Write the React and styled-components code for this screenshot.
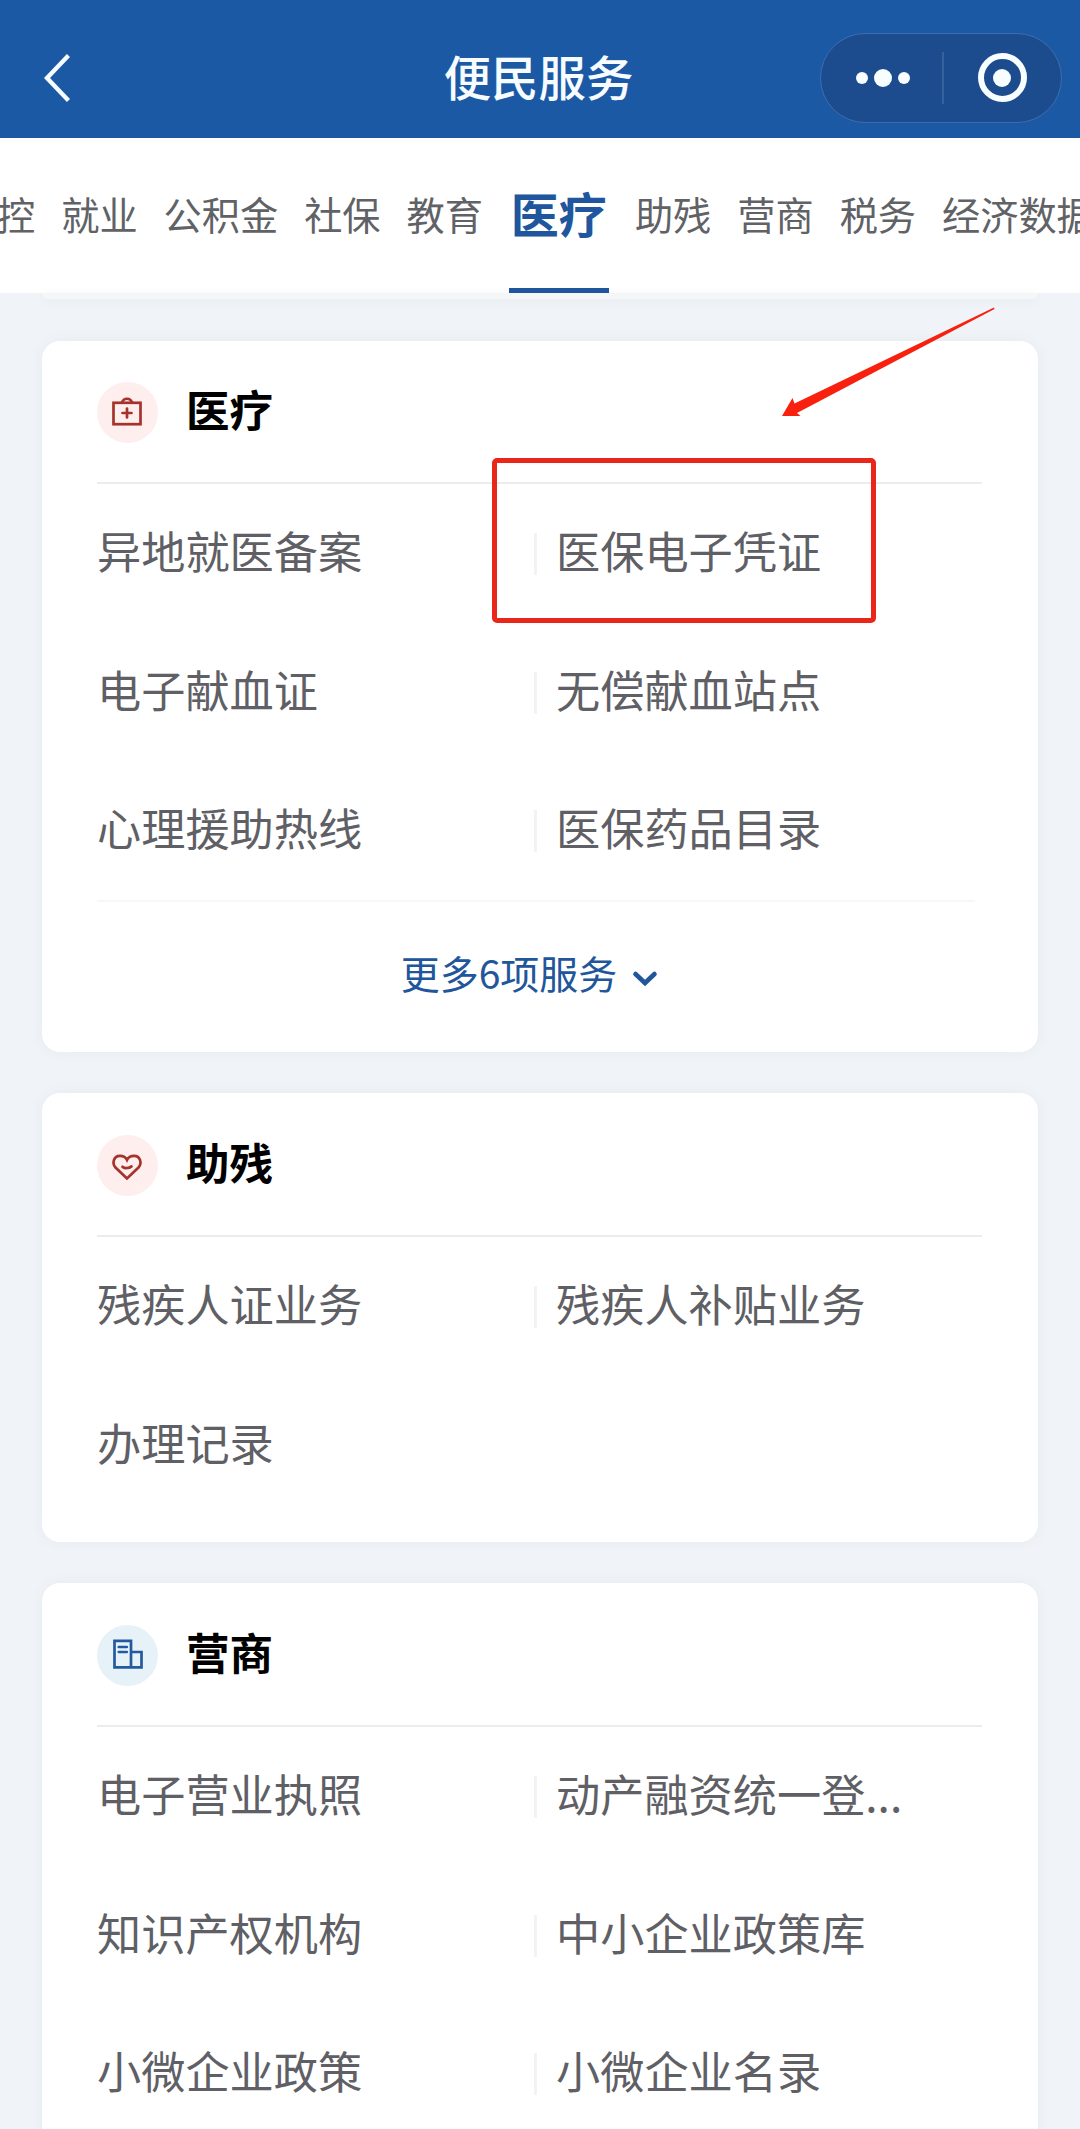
import React, { useState } from 'react';
import styled, { createGlobalStyle } from 'styled-components';

const tabs = ['控', '就业', '公积金', '社保', '教育', '医疗', '助残', '营商', '税务', '经济数据'];

const sections = [
  {
    id: 'medical',
    title: '医疗',
    tone: 'red',
    icon: 'kit',
    items: ['异地就医备案', '医保电子凭证', '电子献血证', '无偿献血站点', '心理援助热线', '医保药品目录'],
    more: 6,
  },
  {
    id: 'disabled',
    title: '助残',
    tone: 'red',
    icon: 'heart',
    items: ['残疾人证业务', '残疾人补贴业务', '办理记录'],
  },
  {
    id: 'business',
    title: '营商',
    tone: 'blue',
    icon: 'building',
    items: ['电子营业执照', '动产融资统一登...', '知识产权机构', '中小企业政策库', '小微企业政策', '小微企业名录'],
  },
];

const icons = {
  kit: (
    <>
      <rect x="16.5" y="20.8" width="27" height="21.4" />
      <path d="M25 20.5c1.5-5 8.500-5 10 0M30 26.500v9M25.500 31h9" />
    </>
  ),
  heart: (
    <>
      <path d="M30 43.500L18.500 32.500C14.800 28.500 16.500 20.800 23 20.800C26.500 20.800 28.800 22.300 30 24.800C31.200 22.300 33.500 20.800 37 20.800C43.500 20.800 45.200 28.500 41.500 32.500Z" />
      <path d="M25.500 31.800c2.400 1.800 6.600 1.600 9-.4" />
    </>
  ),
  building: (
    <>
      <path d="M17.500 15.800h16.500v26.600H17.500zM34 27h10.500v15.400H34" />
      <path d="M21.800 22h8M21.800 27h8" />
    </>
  ),
};

const App = () => {
  const [activeTab, setActiveTab] = useState('医疗');

  return (
    <Page>
      <GlobalStyle />
      <NavBar>
        <BackIcon viewBox="0 0 26 48">
          <path d="M24.500 1.500L3 24L24.500 46.500" />
        </BackIcon>
        <NavTitle>便民服务</NavTitle>
        <Capsule>
          <CapsuleHalf>
            <Dot $size={12} />
            <Dot $size={18} />
            <Dot $size={12} />
          </CapsuleHalf>
          <CapsuleDivider />
          <CapsuleHalf>
            <Ring>
              <Dot $size={18} />
            </Ring>
          </CapsuleHalf>
        </Capsule>
      </NavBar>

      <TabBar>
        {tabs.map((tab) => (
          <Tab key={tab} $active={tab === activeTab} onClick={() => setActiveTab(tab)}>
            {tab}
          </Tab>
        ))}
      </TabBar>

      <Content>
        <PreviousCard />
        {sections.map((section) => (
          <Card key={section.id}>
            <CardHeader>
              <IconCircle $tone={section.tone}>
                <svg viewBox="0 0 61 61">{icons[section.icon]}</svg>
              </IconCircle>
              <CardTitle>{section.title}</CardTitle>
            </CardHeader>
            <ServiceGrid>
              {section.items.map((item) => (
                <Service key={item}>
                  <ServiceName>{item}</ServiceName>
                </Service>
              ))}
            </ServiceGrid>
            {section.more ? (
              <MoreButton>
                更多{section.more}项服务
                <Chevron viewBox="0 0 28 18">
                  <path d="M4.500 4L14 13L23.500 4" />
                </Chevron>
              </MoreButton>
            ) : (
              <CardFoot />
            )}
          </Card>
        ))}
      </Content>

      <HighlightBox />
      <Arrow viewBox="0 0 220 116">
        <path d="M214 2.500L14.500 98.500L12.500 93L2 111H20.500L17 108L214.500 4Z" />
      </Arrow>
    </Page>
  );
};

export default App;

const GlobalStyle = createGlobalStyle`
  * {
    box-sizing: border-box;
  }

  body {
    margin: 0;
    font-family: "Noto Sans CJK SC", sans-serif;
    background: #f0f4f8;
  }
`;

const Page = styled.div`
  position: relative;
  height: 2129px;
  overflow: hidden;
  background: #f0f4f8;
`;

const NavBar = styled.header`
  display: grid;
  grid-template-columns: 260px 1fr 260px;
  align-items: center;
  height: 138px;
  padding-top: 17px;
  background: #1c59a5;
`;

const BackIcon = styled.svg`
  width: 26px;
  height: 48px;
  margin-left: 44px;
  fill: none;
  stroke: #f6fcff;
  stroke-width: 4.4;
`;

const NavTitle = styled.h1`
  margin: 0 3px 3px 0;
  font-size: 47.4px;
  font-weight: 500;
  line-height: 60px;
  text-align: center;
  color: #f6fcff;
`;

const Capsule = styled.div`
  display: flex;
  align-items: center;
  width: 242px;
  height: 90px;
  border: 1px solid #3a6fb0;
  border-radius: 45px;
  background: #1c4c8d;
`;

const CapsuleHalf = styled.div`
  display: flex;
  flex: 1;
  align-items: center;
  justify-content: center;
  gap: 6px;

  &:first-child {
    padding-left: 3px;
  }
`;

const CapsuleDivider = styled.span`
  width: 2px;
  height: 52px;
  background: #35619d;
`;

const Dot = styled.span`
  width: ${({ $size }) => $size}px;
  height: ${({ $size }) => $size}px;
  border-radius: 50%;
  background: #f8fdff;
`;

const Ring = styled.span`
  display: flex;
  align-items: center;
  justify-content: center;
  width: 49px;
  height: 49px;
  border: 6px solid #f8fdff;
  border-radius: 50%;
`;

const TabBar = styled.nav`
  display: flex;
  gap: 26px;
  height: 155px;
  margin-left: -3px;
  white-space: nowrap;
  background: #fff;
`;

const Tab = styled.div`
  flex: none;
  height: 155px;
  min-width: ${({ $active }) => ($active ? '100px' : '0')};
  border-bottom: 5px solid ${({ $active }) => ($active ? '#20569d' : 'transparent')};
  font-size: ${({ $active }) => ($active ? '48px' : '38.2px')};
  font-weight: ${({ $active }) => ($active ? 700 : 400)};
  line-height: ${({ $active }) => ($active ? '149px' : '152px')};
  text-align: center;
  color: ${({ $active }) => ($active ? '#20569d' : '#606266')};
`;

const Content = styled.main`
  display: flex;
  flex-direction: column;
  gap: 41.5px;
  padding: 0 42px;
`;

const PreviousCard = styled.div`
  height: 6px;
  border-radius: 0 0 18px 18px;
  background: #f4f6f8;
  box-shadow: 0 2px 10px rgba(60, 80, 100, 0.06);
`;

const Card = styled.section`
  padding: 0 56px 0 55px;
  border-radius: 18px;
  background: #fff;
  box-shadow: 0 0 14px rgba(60, 80, 90, 0.06);
`;

const CardHeader = styled.div`
  display: flex;
  align-items: center;
  gap: 28px;
  height: 143.5px;
  padding-top: 2px;
  border-bottom: 2px solid #ececee;
`;

const IconCircle = styled.span`
  width: 61px;
  height: 61px;
  border-radius: 50%;
  background: ${({ $tone }) => ($tone === 'red' ? '#feeeed' : '#e6f2f8')};

  svg {
    display: block;
    fill: none;
    stroke: ${({ $tone }) => ($tone === 'red' ? '#a5322b' : '#235a9f')};
    stroke-width: 2.7;
    stroke-linecap: round;
  }
`;

const CardTitle = styled.h2`
  margin: 0 0 6px;
  font-size: 43.5px;
  font-weight: 700;
  line-height: 60px;
  color: #000;
`;

const ServiceGrid = styled.div`
  display: grid;
  grid-template-columns: 437px 1fr;
`;

const Service = styled.div`
  display: flex;
  align-items: center;
  height: 138.6px;
  padding-top: 2px;

  &:nth-child(even)::before {
    content: '';
    width: 3px;
    height: 42px;
    margin-right: 19px;
    background: #f3f3f5;
  }
`;

const ServiceName = styled.span`
  padding-bottom: 8px;
  font-size: 44.2px;
  line-height: 64px;
  white-space: nowrap;
  color: #5f6065;
`;

const MoreButton = styled.div`
  display: flex;
  align-items: center;
  justify-content: center;
  gap: 14px;
  height: 152px;
  margin-right: 7px;
  padding: 0 12px 9px 0;
  border-top: 2px solid #f7f7f8;
  font-size: 39px;
  color: #22569b;
`;

const Chevron = styled.svg`
  width: 28px;
  height: 18px;
  margin-top: 14px;
  fill: none;
  stroke: #22569b;
  stroke-width: 4.6;
  stroke-linecap: round;
`;

const CardFoot = styled.div`
  height: 28px;
`;

const HighlightBox = styled.div`
  position: absolute;
  top: 458px;
  left: 492px;
  width: 384px;
  height: 165px;
  border: 5px solid #ea261b;
  border-radius: 5px;
`;

const Arrow = styled.svg`
  position: absolute;
  top: 305px;
  left: 780px;
  width: 220px;
  height: 116px;
  fill: #f8200f;
`;
